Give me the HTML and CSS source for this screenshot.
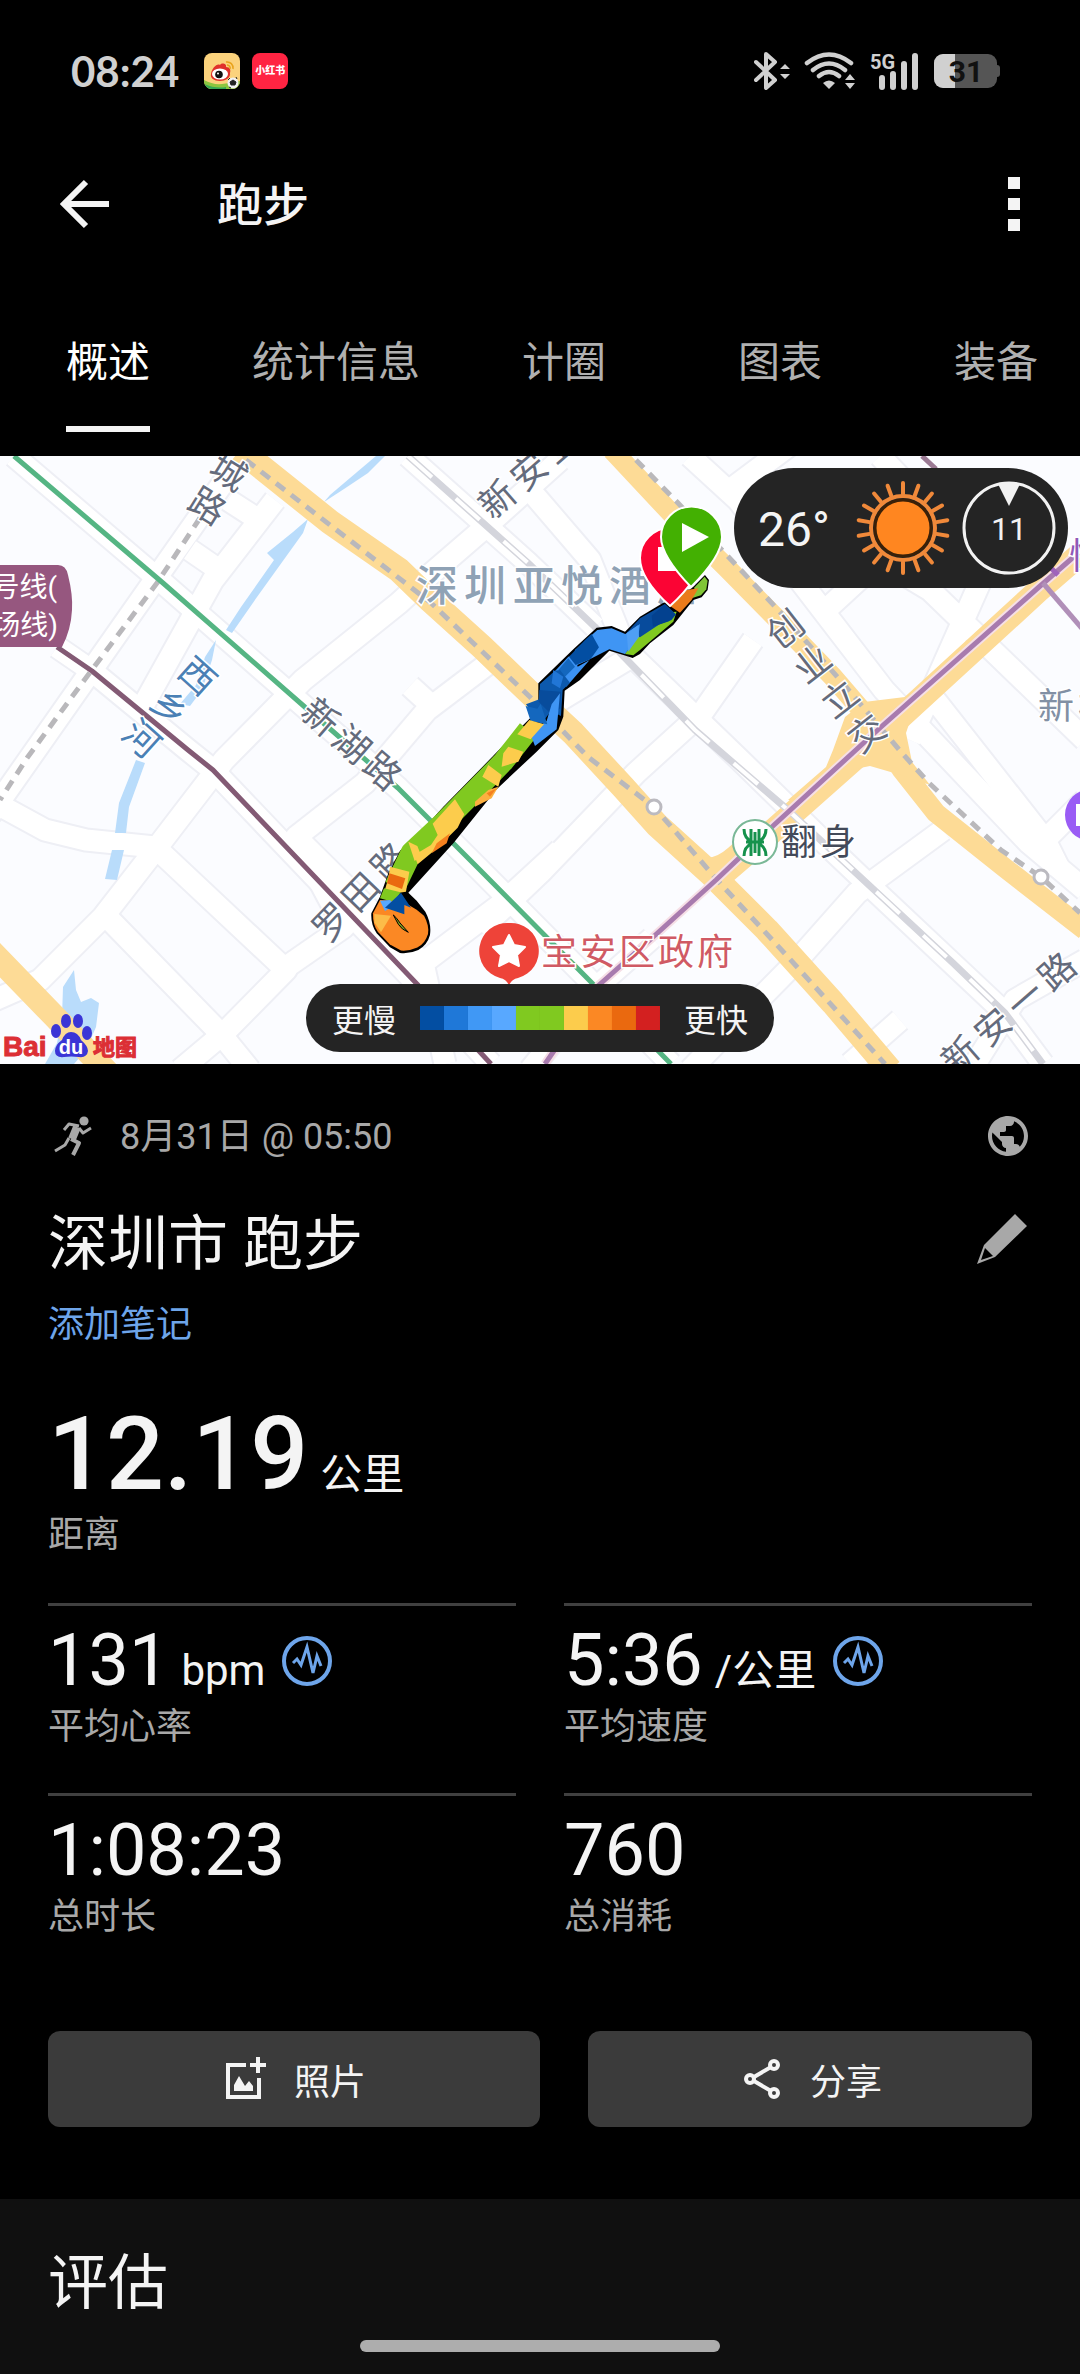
FILE: index.html
```html
<!DOCTYPE html>
<html lang="zh-CN">
<head>
    <meta charset="UTF-8">
    <meta name="viewport" content="width=device-width, initial-scale=1.0">
    <title>跑步</title>
    <link rel="stylesheet" href="styles.css">
</head>
<body>
    <div class="status-bar">
        <span class="time">08:24</span>
        <svg class="app-icon" viewBox="0 0 36 36">
            <clipPath id="appClip"><rect width="36" height="36" rx="8"/></clipPath>
            <g clip-path="url(#appClip)">
                <rect width="36" height="36" fill="#fbd27c"/>
                <path d="M0 27q9 5 18 4t18-3v8H0z" fill="#8cc63f"/>
                <path d="M0 31q12 5 22 3v4H0z" fill="#35a853"/>
                <path d="M7 21c1-6 6-11 9-9 2-3 7-1 6 2 4 0 5 3 4 6 1 5-5 8-10 8-6 0-10-3-9-7z" fill="#e0312b"/>
                <ellipse cx="16" cy="21" rx="8" ry="5.500" fill="#fff"/>
                <circle cx="15" cy="21.500" r="3.800" fill="#111"/>
                <circle cx="14" cy="20.500" r="1" fill="#fff"/>
                <path d="M22 9a6 6 0 0 1 7 7M23 12a3 3 0 0 1 3 4" fill="none" stroke="#e8a31c" stroke-width="1.500"/>
                <circle cx="29" cy="30" r="5.500" fill="#f2f2f2"/>
                <path d="M29 27l3 2-1 3h-4l-1-3zM24 27l2-2M33 26l-1-2M25 34l2 1" fill="#222" stroke="#222"/>
            </g>
        </svg>
        <span class="app-icon red-app">小红书</span>
        <div class="status-icons">
            <svg width="36" height="38" viewBox="0 0 36 38">
                <path d="M2 10l19 18-9 8V2l9 8L2 28" fill="none" stroke="#d0d0d0" stroke-width="4" stroke-linejoin="round" stroke-linecap="round"/>
                <path d="M26 17l5-5 5 5zM26 22h10l-5 5z" fill="#d0d0d0"/>
            </svg>
            <svg width="52" height="38" viewBox="0 0 52 38">
                <g fill="none" stroke="#d0d0d0" stroke-width="4.500" stroke-linecap="round">
                    <path d="M3 11q22-17 44 0M9 18q16-13 32 0M15 24q10-8 20 0"/>
                </g>
                <path d="M19 31q6-5 12 0l-6 6z" fill="#d0d0d0"/>
                <path d="M41 28l5-6 5 6zM41 31h10l-5 6z" fill="#d0d0d0"/>
            </svg>
            <svg width="50" height="38" viewBox="0 0 50 38">
                <text class="net-label" x="0" y="17">5G</text>
                <path d="M12 26v9M23 22v13M34 12v23M45 4v31" stroke="#d0d0d0" stroke-width="6" stroke-linecap="round"/>
            </svg>
            <svg width="66" height="38" viewBox="0 0 66 38">
                <clipPath id="batClip"><rect y="2" width="63" height="34" rx="9"/></clipPath>
                <rect x="60" y="13" width="6" height="12" rx="3" fill="#555"/>
                <g clip-path="url(#batClip)">
                    <rect width="63" height="38" fill="#555"/>
                    <rect width="21" height="38" fill="#d0d0d0"/>
                </g>
                <text class="bat-label" x="32" y="30">31</text>
            </svg>
        </div>
    </div>

    <header>
        <button class="icon-btn" type="button" aria-label="返回">
            <svg width="50" height="50" viewBox="0 0 50 50">
                <path d="M26 3L4 25l22 22M4 25h45" fill="none" stroke="#f4f4f4" stroke-width="6"/>
            </svg>
        </button>
        <h1>跑步</h1>
        <button class="icon-btn" type="button" aria-label="更多">
            <svg width="12" height="54" viewBox="0 0 12 54">
                <path d="M0 0h12v12H0zM0 21h12v12H0zM0 42h12v12H0z" fill="#f4f4f4"/>
            </svg>
        </button>
    </header>

    <nav class="tabs">
        <a href="#overview" class="tab active"><span>概述</span></a>
        <a href="#stats" class="tab"><span>统计信息</span></a>
        <a href="#laps" class="tab"><span>计圈</span></a>
        <a href="#charts" class="tab"><span>图表</span></a>
        <a href="#gear" class="tab"><span>装备</span></a>
    </nav>

    <main id="overview">
        <section class="map">
            <svg class="map-canvas" viewBox="0 456 1080 608" preserveAspectRatio="xMidYMid slice">
                <rect y="456" width="1080" height="608" fill="#fbfcff"/>

                <!-- side streets -->
                <defs>
                    <g id="streets" fill="none" stroke-linejoin="round">
                        <path d="M14 456L163 583 306 708 398 788 480 870 593 984 671 1064"/>
                        <path d="M57 647L92 671 188 750 213 770 417 984 491 1064"/>
                        <path d="M225 480L91 671-10 815"/>
                        <path d="M228 500L262 522M190 550L222 572M275 500L213 580 138 715"/>
                        <path d="M560 460L482 530 424 580 399 603 303 680 224 760 155 850 103 917 40 980-10 1002"/>
                        <path d="M-10 800L45 830 86 840 155 847 286 970 224 1033 180 1070"/>
                        <path d="M107 917L220 1033 250 1070"/>
                        <path d="M282 970L344 927 296 837 365 783 427 710 489 663 M410 686L432 706"/>
                        <path d="M296 837L423 963 500 905 560 850M423 963L445 1064"/>
                        <path d="M530 490L590 560 626 650 740 760 829 847 871 887 1005 1013 1043 1064"/>
                        <path d="M408 456L527 562 595 627"/>
                        <path d="M690 456L738 500 884 690 1029 843 1085 890"/>
                        <path d="M730 490L790 445M880 456L960 540M829 607L880 560 930 590 1085 740"/>
                        <path d="M626 660L560 700M753 640L702 713 636 773 540 873 480 930"/>
                        <path d="M935 700L1045 840 1085 800M1045 840L1060 870"/>
                        <path d="M943 830L857 893 795 963 726 1033 690 1070"/>
                        <path d="M652 938L599 985 530 1070M850 1064L900 1020"/>
                        <path d="M1085 960L1015 1000 975 1064M910 740L990 560"/>
                    </g>
                </defs>
                <use href="#streets" stroke="#eeeff5" stroke-width="25"/>
                <use href="#streets" stroke="#fff" stroke-width="21"/>

                <!-- river and lake -->
                <g fill="#b9dcfb">
                    <path d="M376 456h9L368 473 344 489 324 502 330 495 350 478z"/>
                    <path d="M308 519L293 532 267 553 274 560 241 607 226 630 232 633 257 597 303 533z"/>
                    <path d="M216 640L205 657 196 685 180 704 190 706 202 690 212 660z"/>
                    <path d="M136 760L145 763 129 807 126 833H115L119 803zM112 850h12l-7 30-12-1z"/>
                    <path d="M74 970L76 990 81 1002 91 998 99 1003 96 1027 86 1050 74 1064H45L57 1043 62 1017 63 987z"/>
                </g>

                <!-- main roads -->
                <g fill="none" stroke="#fddb96" stroke-linejoin="round">
                    <path stroke-width="25" d="M240 450L330 522 399 570 430 600 482 647 530 693 573 733 623 787 657 825 710 873 767 930 833 1003 890 1070"/>
                    <path stroke-width="20" d="M612 450L671 513 726 567 781 623 833 677 870 720 902 770 936 813 1005 868 1085 930"/>
                    <path stroke-width="24" d="M-10 950L55 1017 110 1075"/>
                    <path stroke-width="24" d="M1085 550L1039 590 870 745 774 830 716 880"/>
                </g>
                <path d="M864 702L905 697 935 680 912 715 906 733 912 762 930 785 901 775 870 766 850 770 812 802 788 800 826 767 833 750 845 717z" fill="#fddb96"/>
                <path d="M690 850q18 16 38-2l16-14v30q-16 8-8 22l-20 10z" fill="#fddb96"/>

                <!-- railways -->
                <g fill="none" stroke-linejoin="round">
                    <path d="M408 456L527 562 595 627 695 730 788 810 871 887 953 963 1005 1013 1043 1064" stroke="#d4d5dc" stroke-width="7"/>
                    <path d="M408 456L527 562 595 627 695 730 788 810 871 887 953 963 1005 1013 1043 1064" stroke="#fff" stroke-width="4" stroke-dasharray="32 32"/>
                    <g stroke="#b9b8bb" stroke-width="5" stroke-dasharray="11 8">
                        <path d="M200 518L157 583 91 671 27 758 0 800"/>
                        <path d="M246 460L330 525 430 602 530 697 588 757 654 807 719 882 788 957 885 1064"/>
                        <path d="M636 460L678 503 781 613 840 680 902 753 929 783 1001 850 1041 877 1080 913"/>
                    </g>
                </g>

                <!-- metro lines -->
                <g fill="none" stroke-width="5" stroke-linejoin="round">
                    <path d="M14 456L163 583 306 708 398 788 480 870 593 984 671 1064" stroke="#55b583"/>
                    <path d="M57 647L92 671 188 750 213 770 417 984 491 1064" stroke="#835a74"/>
                    <path d="M1085 547L1039 587 881 727 774 825 716 880 652 938 599 985 545 1064" stroke="#f6dfe6" stroke-width="9"/>
                    <path d="M1085 547L1039 587 881 727 774 825 716 880 652 938 599 985 545 1064" stroke="#a87bae"/>
                    <path d="M1043 583L1085 632" stroke="#b08fb8"/>
                    <path d="M922 456L936 469" stroke="#9b7a94"/>
                    <path d="M1050 567l8 8" stroke="#9f63bb"/>
                </g>
                <g fill="#fff" stroke="#bbbac0" stroke-width="3">
                    <circle cx="654" cy="807" r="7"/>
                    <circle cx="1041" cy="877" r="7"/>
                </g>

                <!-- street names -->
                <g class="road-name">
                    <text transform="translate(228 473) rotate(32)" x="0 0" y="0 40">城路</text>
                    <text transform="translate(320 718) rotate(41)" x="0 41 82" y="0">新湖路</text>
                    <text transform="translate(332 923) rotate(-46)" x="0 42 84" y="0">罗田路</text>
                    <text transform="translate(498 500) rotate(-41)" x="0 42 84" y="0">新安五</text>
                    <text transform="translate(786 630) rotate(-38)" x="0 0 0 0" y="0 44 88 132">创业立交</text>
                    <text transform="translate(961 1056) rotate(-41)" x="0 43 86 128" y="0">新安一路</text>
                </g>
                <text class="road-name river-name" transform="translate(197 677) rotate(42)" x="0 0 0" y="0 42 84">西乡河</text>
                <text class="road-name place-name" x="437 485 534 582 630 678" y="586">深圳亚悦酒店</text>
                <text class="road-name area-name" x="1056 1096" y="707">新桥</text>
                <text class="road-name line-name" x="1087" y="557">悦</text>
                <text class="road-name station-name" x="799 838" y="843">翻身</text>
                <text class="road-name gov-name" x="559 598 637 676 715" y="953">宝安区政府</text>

                <!-- metro line badge -->
                <path d="M0 565H58q8 0 10 10 5 20 4 35-1 20-10 37H0z" fill="#96577f"/>
                <text class="line-badge" x="57" y="597">号线(</text>
                <text class="line-badge" x="58" y="635">场线)</text>

                <!-- metro station -->
                <circle cx="755" cy="842" r="22" fill="#fff" stroke="#7ab897" stroke-width="2"/>
                <path d="M744 829q0 9 8 13M766 829q0 9-8 13M744 856q0-9 8-13M766 856q0-9-8-13M751 829v27M759 829v27M755 832v21M746 842h18" fill="none" stroke="#16924c" stroke-width="3"/>

                <!-- government marker -->
                <path d="M509 923a28 28 0 0 1 9 55q-6 1-9 7-3-6-9-7a28 28 0 0 1 9-55z" fill="#ee4339"/>
                <path d="M509 935l5 10 11 2-8 8 2 11-10-5-10 5 2-11-8-8 11-2z" fill="#fff" stroke="#fff" stroke-width="2" stroke-linejoin="round"/>
                <circle cx="1091" cy="815" r="26" fill="#9a5cf5"/>
                <path d="M1076 804h8v22h-8z" fill="#fff"/>

                <!-- recorded track -->
                <g transform="translate(340 500) scale(.3333)">
                    <path d="M1060 260L1095 225 1107 240 1103 270 1085 292 1060 300 1000 375 930 430 900 462 878 474 850 465 808 452 720 540 674 572 670 650 655 690 590 755 470 868 340 1030 205 1178 230 1202 256 1235Q275 1270 270 1305 262 1335 235 1350 210 1362 180 1359L150 1342 110 1300Q92 1275 94 1240L120 1190 145 1120 180 1052 240 998 310 920 430 798 540 685 580 645 595 600 595 550 700 448 770 383 815 378 855 395 900 350 970 308 1010 300z" fill="#000"/>
                    <path d="M565 690L490 785 415 862 312 966 214 1058 165 1160" fill="none" stroke="#80c920" stroke-width="64" stroke-linejoin="round"/>
                    <path d="M1064 262l30-32 9 12-4 26-16 18-26 8z" fill="#80c536"/>
                    <path d="M1040 270l35-5-20 35-35 38-30-20z" fill="#ea7b1b"/>
                    <path d="M900 450L1000 365 1010 335 940 340 855 462 880 466z" fill="#80c920"/>
                    <path d="M1008 343L975 312 900 355 860 398 900 412 960 372 995 360z" fill="#074b9c"/>
                    <path d="M935 347l38-33 34 30-20 20-48 16z" fill="#03418f"/>
                    <path d="M900 372L856 402 815 385 772 390 705 450 700 500 745 480 808 448 855 462 895 410z" fill="#3f95f4"/>
                    <path d="M860 400l35-25 2 35-32 45z" fill="#4f9ff5"/>
                    <path d="M685 470l20-5 8 35 36-20-70 80-40-40z" fill="#3b91f2"/>
                    <path d="M735 420l20 -18 22 40-25 35-45 18-20-25z" fill="#034ea2"/>
                    <path d="M685 475l20 25-30 30-20-20z" fill="#1467be"/>
                    <path d="M600 552l45-40 15-2 30 38-22 22-5 78-30-15-30 40-45-60 40-15z" fill="#0c59ad"/>
                    <path d="M640 510l30 20-10 35-25-15z" fill="#2176d6"/>
                    <path d="M598 570l65 5-2 50-25 20-40-40z" fill="#084c9c"/>
                    <path d="M660 580l-10 108-65 50-15-40 50-35 15-50z" fill="#3f95f4"/>
                    <path d="M557 618l35 8 10-15 20 62-50-10z" fill="#1467be"/>
                    <path d="M568 660l44 13-40 45-40-15z" fill="#fccc4c"/>
                    <path d="M505 740l45 15-15 30-50 15 5-40zM445 795l40 30-10 35-48-30z" fill="#fccc4c"/>
                    <path d="M405 905l40-35 30-10-20 35-50 25z" fill="#fcb040"/>
                    <path d="M440 880l30-15-20 25z" fill="#f5801f"/>
                    <path d="M345 898l28 45-20 40-60 60-60 50-10-28 50-30 20-30-15-34z" fill="#fccc4c"/>
                    <path d="M205 1025l27 13 12 30-20 15z" fill="#fccc4c"/>
                    <path d="M290 1030l40-30-10 30-45 30z" fill="#f5801f"/>
                    <path d="M150 1100l58 15-10 60-68 10 15-50z" fill="#fccc4c"/>
                    <path d="M148 1120l48 15-10 32-45-17z" fill="#ea690f"/>
                    <path d="M132 1165l50 12-20 30-42-12z" fill="#80c920"/>
                    <path d="M120 1200l70 5 40 24 22 18Q268 1275 264 1302 256 1330 232 1343 208 1354 183 1352L150 1334 114 1296Q98 1275 99 1240z" fill="#fb8824"/>
                    <path d="M103 1242l50 5-30 50-20-30z" fill="#fcbc48"/>
                    <path d="M120 1202l30-2 15 15-30 18z" fill="#58a8ff"/>
                    <path d="M183 1178l30 45-20-8 0 28-58-20z" fill="#034ea2"/>
                    <path d="M160 1245q10 8 20 24l25 28q-20-8-30-24z" stroke="#000" stroke-width="3" fill="#80a020"/>
                </g>

                <!-- finish and start pins -->
                <path d="M670 606q-30-27-30-48a30 30 0 0 1 60 0q0 21-30 48z" fill="#fb0434" stroke="#fff" stroke-width="2"/>
                <path d="M658 547h24v24h-24z" fill="#fff"/>
                <path d="M691 587q-30-31-30-50a30 30 0 0 1 61 0q0 19-31 50z" fill="#43b002" stroke="#fff" stroke-width="2"/>
                <path d="M682 523l27 14-27 15z" fill="#fff"/>

                <!-- map provider -->
                <text class="provider" x="3" y="1056">Bai</text>
                <g fill="#3a35d6">
                    <ellipse cx="56" cy="1031" rx="5" ry="7"/>
                    <ellipse cx="66" cy="1021" rx="5" ry="7"/>
                    <ellipse cx="78" cy="1021" rx="5" ry="7"/>
                    <ellipse cx="87" cy="1033" rx="5" ry="7"/>
                    <path d="M71 1032q7 0 10 8 7 6 7 11-1 7-9 6-8-1-15 0-9 1-9-6 0-6 7-11 3-8 9-8z"/>
                </g>
                <text class="provider-mark" x="71" y="1054">du</text>
                <text class="provider provider-cn" x="93" y="1055">地图</text>
            </svg>

            <div class="weather">
                <span class="temp">26°</span>
                <svg width="94" height="94" viewBox="-47 -47 94 94">
                    <g stroke="#f0893a" stroke-width="4" stroke-linecap="round">
                        <path id="ray" d="M0-34V-45"/>
                        <use href="#ray" transform="rotate(20)"/>
                        <use href="#ray" transform="rotate(40)"/>
                        <use href="#ray" transform="rotate(60)"/>
                        <use href="#ray" transform="rotate(80)"/>
                        <use href="#ray" transform="rotate(100)"/>
                        <use href="#ray" transform="rotate(120)"/>
                        <use href="#ray" transform="rotate(140)"/>
                        <use href="#ray" transform="rotate(160)"/>
                        <use href="#ray" transform="rotate(180)"/>
                        <use href="#ray" transform="rotate(200)"/>
                        <use href="#ray" transform="rotate(220)"/>
                        <use href="#ray" transform="rotate(240)"/>
                        <use href="#ray" transform="rotate(260)"/>
                        <use href="#ray" transform="rotate(280)"/>
                        <use href="#ray" transform="rotate(300)"/>
                        <use href="#ray" transform="rotate(320)"/>
                        <use href="#ray" transform="rotate(340)"/>
                    </g>
                    <circle r="32" fill="none" stroke="#f0893a" stroke-width="4"/>
                    <circle r="28" fill="#ff8620" stroke="#3a2008" stroke-width="3"/>
                </svg>
                <svg width="94" height="94" viewBox="-47 -47 94 94">
                    <circle r="45" fill="none" stroke="#f2f2f2" stroke-width="3"/>
                    <path d="M-11-44Q0-48 11-44L0-22z" fill="#f2f2f2"/>
                    <text class="wind" x="0" y="12">11</text>
                </svg>
            </div>

            <div class="legend">
                <span>更慢</span>
                <div class="scale">
                    <i class="c1"></i><i class="c2"></i><i class="c3"></i><i class="c4"></i><i class="c5"></i>
                    <i class="c5"></i><i class="c6"></i><i class="c7"></i><i class="c8"></i><i class="c9"></i>
                </div>
                <span>更快</span>
            </div>
        </section>

        <section class="activity">
            <div class="meta">
                <svg width="38" height="40" viewBox="0 0 38 40">
                    <circle cx="30" cy="5" r="4.600" fill="#a8a8a8"/>
                    <g fill="none" stroke="#a8a8a8" stroke-linejoin="round">
                        <path d="M10 14l5-6 10 2M25 12l4 5 8-5" stroke-width="3"/>
                        <path d="M23 11l-5 12" stroke-width="8"/>
                        <path d="M17 23l8 4-6 12" stroke-width="4"/>
                        <path d="M15 22l-4 7-10 6" stroke-width="3"/>
                    </g>
                </svg>
                <span>8月31日 @ 05:50</span>
                <svg class="globe" width="48" height="48" viewBox="0 0 24 24">
                    <path d="M12 2C6.480 2 2 6.480 2 12s4.480 10 10 10 10-4.480 10-10S17.520 2 12 2zm-1 17.930c-3.950-.490-7-3.850-7-7.930 0-.620.080-1.210.210-1.790L9 15v1c0 1.100.900 2 2 2v1.930zm6.900-2.540c-.260-.810-1-1.390-1.900-1.390h-1v-3c0-.550-.450-1-1-1H8v-2h2c.550 0 1-.450 1-1V7h2c1.100 0 2-.900 2-2v-.410c2.930 1.190 5 4.060 5 7.410 0 2.080-.800 3.970-2.100 5.390z" fill="#a8a8a8"/>
                </svg>
            </div>
            <div class="title-row">
                <h2>深圳市 跑步</h2>
                <button class="icon-btn" type="button" aria-label="编辑">
                    <svg width="50" height="50" viewBox="0 0 50 50">
                        <path d="M38 0l12 12-32 31-18 7 7-19zM8 34l-4 12 12-4z" fill="#a8a8a8" fill-rule="evenodd"/>
                    </svg>
                </button>
            </div>
            <a href="#note" class="note">添加笔记</a>

            <div class="distance">
                <p class="big">12.19 <small>公里</small></p>
                <p class="label">距离</p>
            </div>

            <div class="stats">
                <div class="stat">
                    <p class="value">131 <small>bpm</small>
                        <svg width="50" height="50" viewBox="0 0 50 50">
                            <circle cx="25" cy="25" r="23" fill="none" stroke="#6ea5ea" stroke-width="4"/>
                            <path d="M11 27l4-4 4 6 6-18 6 26 4-17 4 10" fill="none" stroke="#6ea5ea" stroke-width="3"/>
                        </svg>
                    </p>
                    <p class="label">平均心率</p>
                </div>
                <div class="stat">
                    <p class="value">5:36 <small>/公里</small>
                        <svg width="50" height="50" viewBox="0 0 50 50">
                            <circle cx="25" cy="25" r="23" fill="none" stroke="#6ea5ea" stroke-width="4"/>
                            <path d="M11 27l4-4 4 6 6-18 6 26 4-17 4 10" fill="none" stroke="#6ea5ea" stroke-width="3"/>
                        </svg>
                    </p>
                    <p class="label">平均速度</p>
                </div>
                <div class="stat">
                    <p class="value">1:08:23</p>
                    <p class="label">总时长</p>
                </div>
                <div class="stat">
                    <p class="value">760</p>
                    <p class="label">总消耗</p>
                </div>
            </div>

            <div class="actions">
                <button class="action photo" type="button">
                    <svg width="48" height="48" viewBox="0 0 48 48">
                        <path d="M24 10H6v32h31V23" fill="none" stroke="#f4f4f4" stroke-width="4"/>
                        <path d="M28 10h16M36 2v16" stroke="#f4f4f4" stroke-width="4"/>
                        <path d="M12 36V30l5-9 6 10 4-5 4 5v5z" fill="#f4f4f4"/>
                    </svg>
                    照片
                </button>
                <button class="action share" type="button">
                    <svg width="48" height="48" viewBox="0 0 48 48">
                        <g fill="none" stroke="#f4f4f4" stroke-width="4">
                            <circle cx="12" cy="24" r="4"/>
                            <circle cx="36" cy="10" r="4"/>
                            <circle cx="36" cy="38" r="4"/>
                            <path d="M16 22l17-10M16 26l17 10"/>
                        </g>
                    </svg>
                    分享
                </button>
            </div>
        </section>
    </main>

    <section class="review">
        <h2>评估</h2>
        <div class="home-bar"></div>
    </section>
</body>
</html>
```

FILE: styles.css
```css
* {
    box-sizing: border-box;
}
body {
    margin: 0;
    min-height: 100vh;
    display: flex;
    flex-direction: column;
    background-color: #000;
    color: #f4f4f4;
    font-family: Roboto, "Noto Sans CJK SC", sans-serif;
    font-size: 36px;
}
h1, h2, p {
    margin: 0;
    font-weight: 400;
}
svg {
    display: block;
    flex-shrink: 0;
}
button {
    border: none;
    background: none;
    padding: 0;
    color: inherit;
    font: inherit;
    cursor: pointer;
}
a {
    text-decoration: none;
}

/* status bar */
.status-bar {
    display: flex;
    align-items: center;
    height: 142px;
    padding: 0 80px 0 71px;
}
.time {
    margin-right: 25px;
    color: #d0d0d0;
    font-family: Lato, sans-serif;
    font-size: 42px;
    font-weight: 700;
}
.app-icon {
    width: 36px;
    height: 36px;
    margin-right: 12px;
}
.red-app {
    border-radius: 8px;
    background-color: #ff2442;
    color: #fff;
    font-size: 10px;
    font-weight: 900;
    line-height: 36px;
    text-align: center;
}
.status-icons {
    display: flex;
    gap: 14px;
    margin-left: auto;
}
.net-label {
    fill: #d0d0d0;
    font-size: 20px;
    font-weight: 700;
}
.bat-label {
    fill: #111;
    font-size: 30px;
    font-weight: 700;
    text-anchor: middle;
}

/* header */
header {
    display: flex;
    align-items: center;
    height: 124px;
    padding: 0 60px;
}
header h1 {
    flex: 1;
    margin-left: 107px;
    font-size: 46px;
    font-weight: 500;
    line-height: 60px;
    padding-top: 2px;
}
.tabs {
    display: flex;
    height: 190px;
    overflow: hidden;
}
.tab {
    flex-shrink: 0;
    min-width: 216px;
    padding: 67px 36px 0;
    color: #b0b0b0;
    font-size: 42px;
    line-height: 60px;
    text-align: center;
}
.tab span {
    display: inline-block;
    padding-bottom: 33px;
}
.tab.active {
    color: #fff;
}
.tab.active span {
    border-bottom: 6px solid #f4f4f4;
}

/* map */
.map {
    position: relative;
    height: 608px;
}
.map-canvas {
    width: 100%;
    height: 100%;
}
.road-name {
    fill: #646b7c;
    stroke: #fff;
    stroke-width: 3px;
    paint-order: stroke;
    font-size: 36px;
    text-anchor: middle;
    dominant-baseline: central;
}
.river-name {
    fill: #4a80b5;
}
.place-name {
    fill: #8fa2b5;
    font-size: 42px;
    font-weight: 500;
}
.area-name {
    fill: #8290a4;
}
.line-name {
    fill: #9058b8;
}
.station-name {
    fill: #434a59;
}
.gov-name {
    fill: #d05a64;
}
.line-badge {
    fill: #fff;
    font-size: 28px;
    text-anchor: end;
}
.provider {
    fill: #dc2f35;
    stroke: #dc2f35;
    stroke-width: 1px;
    font-family: "Liberation Sans", sans-serif;
    font-size: 28px;
    font-weight: 700;
}
.provider-cn {
    font-family: "Noto Sans CJK SC", sans-serif;
    font-size: 22px;
}
.provider-mark {
    fill: #fff;
    font-family: "Liberation Sans", sans-serif;
    font-size: 20px;
    font-weight: 700;
    text-anchor: middle;
}
.weather {
    position: absolute;
    top: 12px;
    right: 12px;
    display: flex;
    align-items: center;
    gap: 12px;
    height: 120px;
    padding: 0 12px 0 24px;
    border-radius: 60px;
    background-color: #242424;
}
.temp {
    margin-right: 14px;
    padding-top: 3px;
    font-size: 48px;
}
.wind {
    fill: #f2f2f2;
    font-size: 32px;
    text-anchor: middle;
}
.legend {
    position: absolute;
    bottom: 12px;
    left: 50%;
    display: flex;
    align-items: center;
    gap: 24px;
    height: 68px;
    padding: 0 26px;
    border-radius: 34px;
    background-color: #242424;
    font-size: 32px;
    white-space: nowrap;
    transform: translateX(-50%);
}
.scale {
    display: flex;
}
.scale i {
    width: 24px;
    height: 24px;
}
.c1 { background-color: #034ea2; }
.c2 { background-color: #1f78d8; }
.c3 { background-color: #4098f5; }
.c4 { background-color: #58a8ff; }
.c5 { background-color: #80c920; }
.c6 { background-color: #fccc4c; }
.c7 { background-color: #fb8824; }
.c8 { background-color: #ea690f; }
.c9 { background-color: #d32020; }

/* activity summary */
.activity {
    padding: 48px 48px 72px;
}
.meta {
    display: flex;
    align-items: center;
    height: 48px;
    padding-left: 6px;
    color: #a8a8a8;
}
.meta span {
    margin-left: 28px;
    padding-bottom: 6px;
}
.globe {
    margin-left: auto;
}
.title-row {
    display: flex;
    align-items: center;
    justify-content: space-between;
    margin-top: 40px;
    padding-right: 5px;
}
.title-row .icon-btn {
    padding-bottom: 12px;
}
h2 {
    font-size: 60px;
    line-height: 90px;
}
.note {
    display: block;
    margin-top: 11px;
    color: #6ea5ea;
    line-height: 48px;
}
.distance {
    margin-top: 45px;
}
.big {
    display: flex;
    align-items: baseline;
    height: 117px;
    font-size: 102px;
    font-weight: 500;
    line-height: 120px;
}
small {
    margin-left: 12px;
    font-size: 42px;
    font-weight: 400;
    line-height: 48px;
}
.label {
    color: #a8a8a8;
    line-height: 48px;
}
.stats {
    display: grid;
    grid-template-columns: 1fr 1fr;
    column-gap: 48px;
    margin-top: 44px;
}
.stat {
    height: 190px;
    padding-top: 13px;
    border-top: 3px solid #404040;
}
.value {
    display: flex;
    align-items: baseline;
    height: 84px;
    font-size: 72px;
    line-height: 84px;
}
.value svg {
    align-self: center;
    margin-left: 17px;
}
.actions {
    display: flex;
    gap: 48px;
    margin-top: 48px;
}
.action {
    display: flex;
    align-items: center;
    justify-content: center;
    gap: 24px;
    height: 96px;
    border-radius: 12px;
    background-color: #3b3b3b;
}
.photo {
    flex: 41;
}
.share {
    flex: 37;
}

/* review */
.review {
    display: flex;
    flex: 1;
    flex-direction: column;
    justify-content: space-between;
    padding: 40px 48px 22px;
    background-color: #101010;
}
.home-bar {
    align-self: center;
    width: 360px;
    height: 12px;
    border-radius: 6px;
    background-color: #adadad;
}
```
